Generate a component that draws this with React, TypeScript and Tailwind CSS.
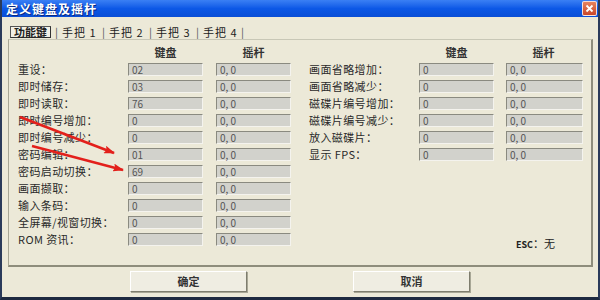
const leftRows = [
  { label: "重设：", key: "02", joy: "0, 0" },
  { label: "即时储存：", key: "03", joy: "0, 0" },
  { label: "即时读取：", key: "76", joy: "0, 0" },
  { label: "即时编号增加：", key: "0", joy: "0, 0" },
  { label: "即时编号减少：", key: "0", joy: "0, 0" },
  { label: "密码编辑：", key: "01", joy: "0, 0" },
  { label: "密码启动切换：", key: "69", joy: "0, 0" },
  { label: "画面撷取：", key: "0", joy: "0, 0" },
  { label: "输入条码：", key: "0", joy: "0, 0" },
  { label: "全屏幕/视窗切换：", key: "0", joy: "0, 0" },
  { label: "ROM 资讯：", key: "0", joy: "0, 0" }
];

const rightRows = [
  { label: "画面省略增加：", key: "0", joy: "0, 0" },
  { label: "画面省略减少：", key: "0", joy: "0, 0" },
  { label: "磁碟片编号增加：", key: "0", joy: "0, 0" },
  { label: "磁碟片编号减少：", key: "0", joy: "0, 0" },
  { label: "放入磁碟片：", key: "0", joy: "0, 0" },
  { label: "显示 FPS：", key: "0", joy: "0, 0" }
];

const tabs = ["手把 1", "手把 2", "手把 3", "手把 4"];

function Field({ value, wide }: { value: string; wide?: boolean }) {
  return (
    <div
      className={`flex h-[13px] items-center border border-t-[#8a8a80] border-l-[#8a8a80] border-b-[#f4f3ee] border-r-[#f4f3ee] bg-[#d2d2cc] pl-[3px] text-[10px] leading-none text-[#555] ${
        wide ? "w-[77px]" : "w-[75px]"
      }`}
    >
      {value}
    </div>
  );
}

function Column({
  rows,
  jw,
  gap
}: {
  rows: { label: string; key: string; joy: string }[];
  jw?: boolean;
  gap: string;
}) {
  return (
    <div className="flex flex-col">
      <div className="flex h-[13px] items-center text-[11px] font-bold text-[#333]">
        <div className="w-[110px]" />
        <div className="w-[75px] text-center">键盘</div>
        <div className={gap} />
        <div className="w-[75px] text-center">摇杆</div>
      </div>
      <div className="mt-[4px] flex flex-col gap-[4px]">
        {rows.map((r) => (
          <div key={r.label} className="flex h-[13px] items-center">
            <div className="w-[110px] text-[11px] leading-none tracking-[0.4px] text-[#2a2a2a]">{r.label}</div>
            <Field value={r.key} />
            <div className={gap} />
            <Field value={r.joy} wide={jw} />
          </div>
        ))}
      </div>
    </div>
  );
}

export default function App() {
  return (
    <div
      className="relative flex h-[300px] w-[600px] flex-col overflow-hidden border-x-[2px] border-b-[3px] border-x-[#2a3a5a] border-b-[#1e2a40] bg-[#ECE9D8]"
      style={{ fontFamily: '"Noto Sans CJK SC", "DejaVu Sans", sans-serif' }}
    >
      {/* title bar */}
      <div className="flex h-[17px] shrink-0 items-center justify-between bg-gradient-to-b from-[#3a80f4] via-[#0c58e6] to-[#0a4ed6] pl-[4px] pr-[1px]">
        <span className="text-[12px] font-bold leading-none tracking-[1px] text-white [text-shadow:1px_1px_0_#0a2a80]">
          定义键盘及摇杆
        </span>
        <div className="flex h-[15px] w-[15px] items-center justify-center rounded-[2px] border border-white/80 bg-gradient-to-b from-[#e6835e] to-[#c8452a]">
          <svg width="9" height="9" viewBox="0 0 9 9">
            <path d="M1.5 1.5 L7.5 7.5 M7.5 1.5 L1.5 7.5" stroke="white" strokeWidth="1.8" />
          </svg>
        </div>
      </div>

      {/* tabs */}
      <div className="ml-[8px] mt-[9px] flex h-[12px] items-center text-[11px] leading-none text-[#222]">
        <div className="flex h-[12px] items-center border border-[#555] border-r-[#333] border-b-[#333] bg-[#f2f0e6] px-[3px] font-bold">
          功能键
        </div>
        {tabs.map((t) => (
          <div key={t} className="flex items-center">
            <span className="mx-[4px] text-[#555]">|</span>
            <span className="w-[36px] tracking-[1px]">{t}</span>
          </div>
        ))}
        <span className="mx-[2px] text-[#555]">|</span>
      </div>

      {/* panel */}
      <div className="ml-[6px] mt-[1px] flex h-[228px] w-[585px] border border-[#c8c7b6] border-b-[2px] border-l-[#a8a796] border-r-[2px] border-b-[#8e8d7c] border-r-[#8e8d7c] pl-[9px] pt-[6px]">
        <Column rows={leftRows} gap="w-[13px]" />
        <div className="ml-[18px] flex flex-col">
          <Column rows={rightRows} jw gap="w-[12px]" />
          <div className="mt-auto mb-[16px] mr-[28px] self-end text-[11px] leading-none text-[#222]">
            <span className="text-[9px] font-bold">ESC</span>：无
          </div>
        </div>
      </div>

      {/* buttons */}
      <div className="mt-[4px] flex gap-[106px] pl-[128px]">
        {["确定", "取消"].map((b) => (
          <button
            key={b}
            className="flex h-[21px] w-[117px] items-center justify-center border border-t-white border-l-white border-b-[#7e7d6e] border-r-[#7e7d6e] bg-[#efede2] text-[11px] font-bold text-[#333] shadow-[1px_1px_0_#a8a796]"
          >
            {b}
          </button>
        ))}
      </div>

      {/* red annotation arrows */}
      <svg className="pointer-events-none absolute left-0 top-0" width="600" height="300">
        <defs>
          <marker id="ah" markerWidth="11" markerHeight="8" refX="10" refY="4" orient="auto" markerUnits="userSpaceOnUse">
            <path d="M0 0 L11 4 L0 8 L2 4 Z" fill="#e3201b" />
          </marker>
        </defs>
        <line x1="18" y1="117" x2="112" y2="153" stroke="#e3201b" strokeWidth="2.5" markerEnd="url(#ah)" />
        <line x1="30" y1="146" x2="121" y2="170" stroke="#e3201b" strokeWidth="2.5" markerEnd="url(#ah)" />
      </svg>
    </div>
  );
}
